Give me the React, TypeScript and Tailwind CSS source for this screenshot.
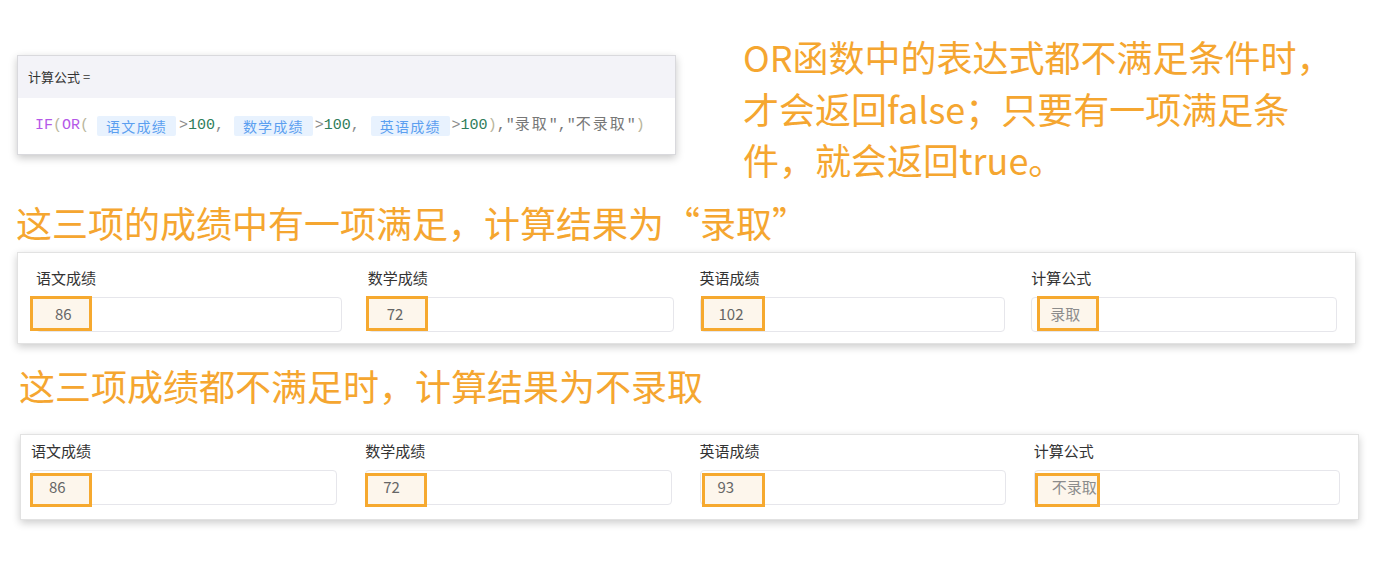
import React from "react";

const CJK = '"Noto Sans CJK SC", "Noto Sans", sans-serif';
const MONO = '"Liberation Mono", "Noto Sans CJK SC", monospace';

type Field = {
  label: string;
  value: string;
  hl: { left: number; top: number; w: number; h: number };
  pl: number;
  light?: boolean;
};

function Tag({ text, ml }: { text: string; ml: string }) {
  return (
    <span
      className={`inline-flex h-[20px] items-center rounded-[2px] bg-[#e8f2fe] px-[9px] text-[14px] tracking-[1.2px] text-[#5b9ff0] ${ml}`}
      style={{ fontFamily: CJK }}
    >
      {text}
    </span>
  );
}

function Cmp() {
  return (
    <>
      <span className="text-[#8a8a8a]">&gt;</span>
      <span className="text-[#2e7d5b]">100</span>
    </>
  );
}

function FieldBox({ f, h }: { f: Field; h: string }) {
  return (
    <div className="flex flex-col">
      <div className="text-[15px] leading-[20px] text-[#333]">{f.label}</div>
      <div
        className={`relative mt-[9px] flex ${h} items-center rounded-[4px] border border-[#e6e6eb] bg-white`}
      >
        <div
          className="absolute border-[3px] border-[#f6a92f] bg-[#fdf6ec]"
          style={{ left: f.hl.left, top: f.hl.top, width: f.hl.w, height: f.hl.h }}
        />
        <span
          className={`relative text-[15px] ${f.light ? "text-[#8c8c8c]" : "text-[#666]"}`}
          style={{ paddingLeft: f.pl }}
        >
          {f.value}
        </span>
      </div>
    </div>
  );
}

export default function App() {
  const card1: Field[] = [
    { label: "语文成绩", value: "86", hl: { left: -7, top: -2, w: 62, h: 35 }, pl: 18 },
    { label: "数学成绩", value: "72", hl: { left: -3, top: -2, w: 62, h: 35 }, pl: 18 },
    { label: "英语成绩", value: "102", hl: { left: 0, top: -2, w: 64, h: 35 }, pl: 18 },
    { label: "计算公式", value: "录取", hl: { left: 5, top: -2, w: 62, h: 35 }, pl: 18, light: true },
  ];
  const card2: Field[] = [
    { label: "语文成绩", value: "86", hl: { left: -2, top: 2, w: 62, h: 34 }, pl: 17 },
    { label: "数学成绩", value: "72", hl: { left: -1, top: 2, w: 62, h: 34 }, pl: 17 },
    { label: "英语成绩", value: "93", hl: { left: 1, top: 2, w: 63, h: 34 }, pl: 17 },
    { label: "计算公式", value: "不录取", hl: { left: 0, top: 2, w: 65, h: 34 }, pl: 17, light: true },
  ];

  return (
    <div
      className="relative h-[573px] w-[1379px] overflow-hidden bg-white"
      style={{ fontFamily: CJK }}
    >
      {/* top row */}
      <div className="flex h-[202px] items-start pt-[31px]">
        <div className="ml-[17px] mt-[24px] w-[659px] border border-[#d9d9dd] bg-white shadow-[0_3px_8px_rgba(0,0,0,0.22)]">
          <div className="flex h-[42px] items-center bg-[#f3f3f8] px-[10px] text-[13px] text-[#333]">
            计算公式&nbsp;=
          </div>
          <div
            className="flex h-[56px] items-center whitespace-nowrap pl-[17px] text-[15px]"
            style={{ fontFamily: MONO }}
          >
            <span className="text-[#b558e8]">IF</span>
            <span className="text-[#b9b69c]">(</span>
            <span className="text-[#b558e8]">OR</span>
            <span className="text-[#b9b69c]">(</span>
            <Tag text="语文成绩" ml="ml-[8px]" />
            <span className="ml-[3px]" />
            <Cmp />
            <span className="text-[#8a8a8a]">,</span>
            <Tag text="数学成绩" ml="ml-[10px]" />
            <span className="ml-[2px]" />
            <Cmp />
            <span className="text-[#8a8a8a]">,</span>
            <Tag text="英语成绩" ml="ml-[11px]" />
            <span className="ml-[2px]" />
            <Cmp />
            <span className="text-[#b9b69c]">)</span>
            <span className="text-[#777]">,</span>
            <span className="text-[#777]">"</span>
            <span className="tracking-[2px] text-[#777]">录取</span>
            <span className="text-[#777]">","</span>
            <span className="tracking-[2px] text-[#777]">不录取</span>
            <span className="text-[#777]">"</span>
            <span className="text-[#b9b69c]">)</span>
          </div>
        </div>
        <div className="ml-[67px] whitespace-nowrap text-[36px] leading-[51.5px] text-[#f5a630]">
          OR函数中的表达式都不满足条件时，
          <br />
          才会返回false；只要有一项满足条
          <br />
          件，就会返回true。
        </div>
      </div>

      {/* headline 2 */}
      <div className="ml-[16px] h-[40px] whitespace-nowrap text-[36px] leading-[40px] text-[#f5a630]">
        这三项的成绩中有一项满足，计算结果为“录取”
      </div>

      {/* card 1 */}
      <div className="ml-[17px] mt-[10px] w-[1339px] border border-[#e2e2e2] bg-white pb-[11px] pl-[18px] pr-[18px] pt-[15px] shadow-[0_3px_8px_rgba(0,0,0,0.2)]">
        <div className="grid grid-cols-4 gap-x-[26px]">
          {card1.map((f) => (
            <FieldBox key={f.label} f={f} h="h-[35px]" />
          ))}
        </div>
      </div>

      {/* headline 3 */}
      <div className="ml-[19px] mt-[21px] h-[40px] whitespace-nowrap text-[36px] leading-[40px] text-[#f5a630]">
        这三项成绩都不满足时，计算结果为不录取
      </div>

      {/* card 2 */}
      <div className="ml-[20px] mt-[29px] w-[1339px] border border-[#e2e2e2] bg-white pb-[14px] pl-[10px] pr-[18px] pt-[6px] shadow-[0_3px_8px_rgba(0,0,0,0.2)]">
        <div className="grid grid-cols-4 gap-x-[28px]">
          {card2.map((f) => (
            <FieldBox key={f.label} f={f} h="h-[35px]" />
          ))}
        </div>
      </div>
    </div>
  );
}
